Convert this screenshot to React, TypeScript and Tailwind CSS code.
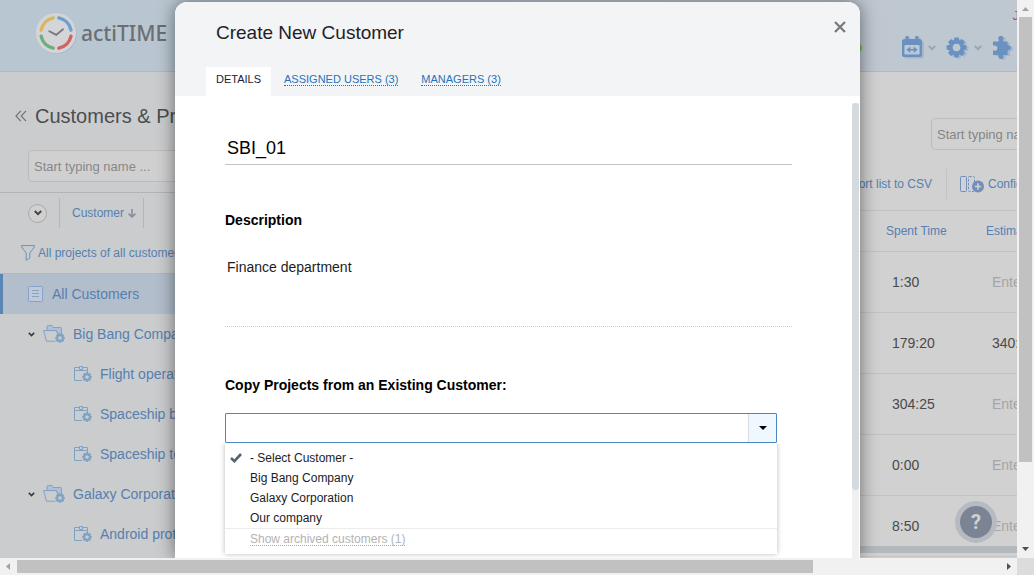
import React from "react";

const teeth = [0, 45, 90, 135];

function Gear({ className, hole }: { className: string; hole: string }) {
  return (
    <svg viewBox="0 0 22 22" className={className} fill="currentColor" aria-hidden="true">
      {teeth.map((a) => (
        <rect key={a} x="8.4" y="0.6" width="5.2" height="20.8" rx="1.2" transform={`rotate(${a} 11 11)`} />
      ))}
      <circle cx="11" cy="11" r="8" />
      <circle cx="11" cy="11" r="4" className={hole} />
    </svg>
  );
}

function Logo() {
  return (
    <svg viewBox="0 0 42 42" className="size-[42px] shrink-0" fill="none" aria-hidden="true">
      <circle cx="22" cy="22" r="20" fill="#adbccb" />
      <circle cx="21" cy="21" r="20" fill="#d3d5d8" />
      <g strokeWidth="3.4" strokeLinecap="round">
        <path d="M6.1 18.2A15.6 15.6 0 0 1 18.2 5.9" stroke="#d9b75f" />
        <path d="M23.8 5.9A15.6 15.6 0 0 1 36 18.2" stroke="#6f9fcd" />
        <path d="M36 24.2A15.6 15.6 0 0 1 23.8 36.2" stroke="#d0655f" />
        <path d="M6.1 24.2A15.6 15.6 0 0 0 18.2 36.2" stroke="#6fae7c" />
      </g>
      <path d="M14.3 19.2L21.2 22.9L28 17.3" stroke="#75787d" strokeWidth="1.8" strokeLinecap="round" />
    </svg>
  );
}

function CalendarShape() {
  return (
    <>
      <rect x="0" y="3" width="20" height="18" rx="2.6" />
      <rect x="3.4" y="0" width="3.4" height="6" rx="1.2" />
      <rect x="13.2" y="0" width="3.4" height="6" rx="1.2" />
    </>
  );
}

function CalendarIcon() {
  return (
    <svg viewBox="0 0 22 23" className="h-[23px] w-[22px]" aria-hidden="true">
      <g fill="#a3b7d0" transform="translate(2 1.4)"><CalendarShape /></g>
      <g fill="#6b91c0"><CalendarShape /></g>
      <rect x="2.4" y="9" width="15.2" height="9.6" rx="1" fill="#bdc8d3" />
      <path d="M4.4 13.8L8.3 10.6V13H11.7V10.6L15.6 13.8L11.7 17V14.6H8.3V17Z" fill="#6b91c0" />
    </svg>
  );
}

function PuzzleIcon() {
  const d =
    "M0 5.4H5.6V3.8A2.6 2.6 0 1 1 10 3.8V5.4H14.6V9.4H15.6A2.4 2.4 0 1 1 15.6 14.2H14.6V19H10.2V19.6A2.5 2.5 0 1 1 5.6 19.6V19H0V14.6H1.2A2.6 2.6 0 1 0 1.2 9.6H0Z";
  return (
    <svg viewBox="0 0 22 24" className="h-6 w-[22px]" aria-hidden="true">
      <path d={d} fill="#a3b7d0" transform="translate(2.4 1)" />
      <path d={d} fill="#6b91c0" />
    </svg>
  );
}

function Chevron({ className }: { className: string }) {
  return (
    <svg viewBox="0 0 8 6" className={className} fill="none" stroke="currentColor" strokeWidth="2" aria-hidden="true">
      <path d="M0.8 1L4 4.2L7.2 1" />
    </svg>
  );
}

function FolderIcon() {
  return (
    <span className="relative h-[18px] w-[22px] shrink-0 text-[#83a0c8]">
      <svg viewBox="0 0 22 18" className="h-[18px] w-[22px]" fill="none" stroke="currentColor" aria-hidden="true">
        <path d="M4 5.5V1.8Q4 0.5 5.2 0.5H9L10.2 2.5H17.5Q18.5 2.5 18.5 3.5V10H16L13 5.5Z" fill="#b0bfd6" />
        <path d="M12.5 16.2H3.5L0.6 5.6H13.2L15 9" />
      </svg>
      <Gear className="absolute left-3 top-2 size-[10px] text-[#7ea3c5]" hole="fill-[#cbccce]" />
    </span>
  );
}

function ProjectIcon() {
  return (
    <span className="relative h-4 w-[17px] shrink-0 text-[#7ea3c5]">
      <svg viewBox="0 0 17 16" className="h-4 w-[17px]" fill="none" stroke="currentColor" aria-hidden="true">
        <path d="M8 14.5H0.5V1.5H13.5V7M0.5 4.5H13.5" />
        <path d="M5.5 3.5V0.5H8.5V3.5Z" fill="#cbccce" />
      </svg>
      <Gear className="absolute left-2 top-1.5 size-[10px]" hole="fill-[#cbccce]" />
    </span>
  );
}

const tree = [
  { name: "Big Bang Company", projects: ["Flight operations", "Spaceship building", "Spaceship testing"] },
  { name: "Galaxy Corporation", projects: ["Android prototype"] },
];

const rows = [
  { spent: "1:30", estimate: "" },
  { spent: "179:20", estimate: "340:00" },
  { spent: "304:25", estimate: "" },
  { spent: "0:00", estimate: "" },
  { spent: "8:50", estimate: "" },
];

const customers = ["- Select Customer -", "Big Bang Company", "Galaxy Corporation", "Our company"];

function Header() {
  return (
    <header className="flex h-18 shrink-0 items-center overflow-hidden border-b border-[#a9bac8] bg-linear-to-r from-[#b8c6d2] to-[#bfc8d0] pl-[35px]">
      <a href="#home" className="flex items-center gap-1 pb-1.5">
        <Logo />
        <span className="font-['Noto_Sans',sans-serif] text-[21px] font-medium leading-7 text-[#6b6e72]">actiTIME</span>
      </a>
      <nav className="ml-auto flex flex-col items-end pt-2">
        <a href="#profile" className="-mr-0.5 text-[13px] leading-4 text-[#8f5a86]">J</a>
        <div className="-mr-1 flex items-center pb-3 pt-3">
          <span className="mr-10 size-3 rounded-full bg-[#7cc04a]" />
          <button aria-label="Calendar"><CalendarIcon /></button>
          <Chevron className="ml-1 mr-2.5 h-1.5 w-2 text-[#9aa5b3]" />
          <button aria-label="Settings" className="relative size-[22px]">
            <Gear className="absolute left-0.5 top-px size-[21px] text-[#a3b7d0]" hole="fill-[#bec8d2]" />
            <Gear className="relative size-[21px] text-[#6b91c0]" hole="fill-[#bec8d2]" />
          </button>
          <Chevron className="ml-1.5 mr-[11px] h-1.5 w-2 text-[#9aa5b3]" />
          <button aria-label="Integrations" className="mr-1.5"><PuzzleIcon /></button>
        </div>
      </nav>
    </header>
  );
}

function Sidebar() {
  return (
    <aside className="w-[300px] shrink-0 overflow-hidden whitespace-nowrap bg-[#cbccce] text-sm text-[#5580b0]">
      <div className="flex h-[78px] items-center gap-2 px-[15px] pt-2.5">
        <svg viewBox="0 0 12 12" className="size-3" fill="none" stroke="#707376" strokeWidth="1.2" aria-hidden="true">
          <path d="M5.8 0.8L1 6L5.8 11.2M11 0.8L6.2 6L11 11.2" />
        </svg>
        <h1 className="text-xl text-[#4b4d50]">Customers &amp; Projects</h1>
      </div>
      <div className="border-b border-[#b3b4b6] pb-2.5 pl-7">
        <input
          aria-label="Find customer or project"
          placeholder="Start typing name ..."
          className="h-8 w-60 rounded-sm border border-[#bbb] bg-[#d0d0d0] px-[5px] text-[13px] placeholder:text-[#888]"
        />
      </div>
      <div className="flex h-10 items-center pl-7 text-xs">
        <button aria-label="Expand all" className="mr-3 grid size-[19px] place-items-center rounded-full border border-[#a9a9aa] bg-[#d0d0d0] text-[#444]">
          <Chevron className="h-1.5 w-2" />
        </button>
        <button className="flex h-[30px] w-[85px] items-center gap-1 border-x border-[#b5b6b8] pl-3">
          Customer
          <svg viewBox="0 0 8 9" className="h-[9px] w-2" fill="none" stroke="#84909c" strokeWidth="1.6" aria-hidden="true">
            <path d="M4 0V8M0.6 4.6L4 8L7.4 4.6" />
          </svg>
        </button>
      </div>
      <button className="flex h-[41px] w-full items-center gap-[3px] border-b border-[#b5b6b8] pl-[21px] text-xs">
        <svg viewBox="0 0 14 16" className="h-4 w-3.5" fill="none" stroke="#6f8fbd" aria-hidden="true">
          <path d="M0.6 0.6H13.4V2L8.8 8V13L5.2 15.2V8L0.6 2Z" />
        </svg>
        All projects of all customers
      </button>
      <a href="#all" className="flex h-10 items-center gap-2 border-l-3 border-[#5a86b5] bg-[#b3becc] pl-[25px]">
        <svg viewBox="0 0 16 16" className="size-4" fill="none" stroke="#86a3cc" aria-hidden="true">
          <rect x="0.5" y="0.5" width="14" height="15" rx="0.8" fill="#bfcad8" />
          <path d="M4 4.5H11M4 7.5H11M4 10.5H11" />
        </svg>
        All Customers
      </a>
      {tree.map((c) => (
        <div key={c.name}>
          <a href="#customer" className="flex h-10 items-center pl-7">
            <Chevron className="mr-2 h-[5px] w-[7px] text-[#3b3b3c]" />
            <FolderIcon />
            <span className="ml-2">{c.name}</span>
          </a>
          {c.projects.map((p) => (
            <a key={p} href="#project" className="flex h-10 items-center gap-[9px] pl-[74px]">
              <ProjectIcon />
              {p}
            </a>
          ))}
        </div>
      ))}
    </aside>
  );
}

function Projects() {
  return (
    <main className="relative min-w-0 flex-1 overflow-hidden bg-[#d1d1d1] text-[#5580b0]">
      <div className="-mr-16 whitespace-nowrap">
        <div className="flex justify-end pt-[46px]">
          <input
            aria-label="Find task"
            placeholder="Start typing name ..."
            className="h-8 w-[150px] rounded-sm border border-[#bcbcbc] px-[5px] text-[13px] placeholder:text-[#858585]"
          />
        </div>
        <div className="flex h-[61px] items-center justify-end border-b border-[#c3c3c3] pt-2 text-xs">
          <button className="mr-3.5">Export list to CSV</button>
          <button className="flex h-[30px] w-[135px] items-center gap-1 border-l border-[#c3c3c3] pl-[13px]">
            <svg viewBox="0 0 24 17" className="h-[17px] w-6" fill="none" stroke="#6f8fbd" aria-hidden="true">
              <rect x="0.5" y="0.5" width="6" height="15" rx="1" />
              <rect x="8.5" y="0.5" width="6" height="15" rx="1" strokeDasharray="2.4 1.4" />
              <circle cx="18" cy="10.5" r="6" fill="#6f8fbd" stroke="none" />
              <path d="M14.8 10.5H21.2M18 7.3V13.7" stroke="#d1d1d1" strokeWidth="1.6" />
            </svg>
            Configure
          </button>
        </div>
        <table className="w-full table-fixed text-left">
          <thead>
            <tr className="h-10 border-b border-[#c3c3c3] text-xs">
              <td />
              <th className="w-[100px] pl-[15px] font-normal">Spent Time</th>
              <th className="w-[110px] pl-[15px] font-normal">Estimate</th>
            </tr>
          </thead>
          <tbody>
            {rows.map((r) => (
              <tr key={r.spent} className="h-[61px] border-b border-[#c3c3c3] text-sm text-[#4a4a4a]">
                <td />
                <td className="pl-[21px]">{r.spent}</td>
                <td className={r.estimate ? "pl-[21px]" : "pl-[21px] text-[#a4a5a8]"}>{r.estimate || "Enter"}</td>
              </tr>
            ))}
          </tbody>
        </table>
      </div>
      <div className="absolute inset-x-0 bottom-[5px] h-[7px] bg-[#b4b9bd]" />
      <button aria-label="Help" className="absolute bottom-[15px] right-5 grid size-[42px] place-items-center rounded-full border-5 border-[#b7bbc1] bg-[#7a8495] font-['Roboto',sans-serif] text-xl font-bold text-[#d0d2d4]">
        ?
      </button>
    </main>
  );
}

function CustomerPicker() {
  return (
    <div className="relative mr-[15px]">
      <div className="flex h-[30px]">
        <select
          id="copy-from"
          defaultValue=""
          className="h-full w-full appearance-none rounded-[1px] border border-[#4a86c2] bg-white px-2 text-xs"
        >
          <option value="" />
          {customers.slice(1).map((c) => (
            <option key={c}>{c}</option>
          ))}
        </select>
        <span className="pointer-events-none absolute right-px top-px grid h-7 w-7 place-items-center border-l border-[#d9dde2] bg-[#f0f8ff]">
          <svg viewBox="0 0 8 4" className="h-1 w-2" aria-hidden="true"><path d="M0 0H8L4 4Z" /></svg>
        </span>
      </div>
      <div className="absolute inset-x-0 top-full bg-white pb-[5px] pt-[5px] text-xs text-[#1c1c1c] shadow-[0_0_5px_rgba(0,0,0,0.28)] [clip-path:inset(0_-8px_-8px_-8px)]">
        <ul role="listbox" aria-label="Customers">
          {customers.map((c, i) => (
            <li key={c} role="option" aria-selected={i === 0} className="flex h-5 items-center">
              <span className="w-[25px] pl-[5px]">
                {i === 0 && (
                  <svg viewBox="0 0 12 10" className="h-2.5 w-3" fill="none" stroke="#59636e" strokeWidth="2.6" aria-hidden="true">
                    <path d="M1 5L4.4 8.2L11 1" />
                  </svg>
                )}
              </span>
              {c}
            </li>
          ))}
        </ul>
        <div className="flex h-[21px] items-end border-t border-[#ececec] pl-[25px]">
          <button className="mb-[3px] border-b border-dotted border-[#aaa] leading-3 text-[#b3b3b3]">Show archived customers (1)</button>
        </div>
      </div>
    </div>
  );
}

function Dialog() {
  return (
    <div
      role="dialog"
      aria-label="Create New Customer"
      className="flex min-w-0 flex-1 flex-col overflow-hidden rounded-t-xl bg-white text-black shadow-[0_0_18px_rgba(0,0,0,0.5)]"
    >
      <div className="flex h-[94px] shrink-0 flex-col justify-between bg-[#f3f4f6] pl-[31px]">
        <div className="flex items-start justify-between pl-2.5 pr-[13px] pt-[18px]">
          <h2 className="text-[19px] leading-[26px] text-[#1f2226]">Create New Customer</h2>
          <button aria-label="Close" className="p-px">
            <svg viewBox="0 0 12 12" className="size-3" stroke="#74797f" strokeWidth="2.2" aria-hidden="true">
              <path d="M1 1L11 11M11 1L1 11" />
            </svg>
          </button>
        </div>
        <div role="tablist" className="flex h-[29px] text-[11px] leading-3">
          <button role="tab" aria-selected="true" className="bg-white px-2.5 pb-1.5 text-[#1d1d2b]">DETAILS</button>
          <button role="tab" aria-selected="false" className="px-[13px] pb-1 text-[#2473bd]">
            <span className="inline-block border-b border-dotted border-[#2473bd]">ASSIGNED USERS (3)</span>
          </button>
          <button role="tab" aria-selected="false" className="px-2.5 pb-1 text-[#2473bd]">
            <span className="inline-block border-b border-dotted border-[#2473bd]">MANAGERS (3)</span>
          </button>
        </div>
      </div>
      <div className="flex min-h-0 flex-1">
        <form className="min-w-0 flex-1 pl-[50px] pr-[60px] pt-9">
          <input aria-label="Customer name" defaultValue="SBI_01" className="block h-[33px] w-full border-b border-[#c4c4c4] pl-0.5 text-lg" />
          <label htmlFor="description" className="mt-[45px] block text-sm font-bold">Description</label>
          <textarea
            id="description"
            defaultValue="Finance department"
            className="mt-[27px] block h-[70px] w-full resize-none border-b border-dotted border-[#c8c8c8] pl-0.5 text-sm text-[#1c1c1c]"
          />
          <label htmlFor="copy-from" className="mb-[18px] mt-12 block text-sm font-bold">Copy Projects from an Existing Customer:</label>
          <CustomerPicker />
        </form>
        <div className="mr-px mt-[7px] w-[7px] bg-[#f0f0f0]">
          <div className="h-[85%] rounded-full bg-[#d5dade]" />
        </div>
      </div>
    </div>
  );
}

export default function App() {
  return (
    <div className="grid h-screen grid-cols-[1fr_17px] grid-rows-[1fr_17px] overflow-hidden font-['Liberation_Sans',Arial,sans-serif]">
      <div className="relative flex min-h-0 min-w-0 flex-col overflow-hidden">
        <Header />
        <div className="flex min-h-0 flex-1">
          <Sidebar />
          <Projects />
        </div>
        <div className="absolute inset-0 flex pl-[175px] pr-[157px] pt-0.5">
          <Dialog />
        </div>
      </div>
      <div className="flex flex-col items-center bg-[#f1f1f1]">
        <svg viewBox="0 0 17 17" className="size-[17px] shrink-0" fill="#a3a3a3" aria-hidden="true"><path d="M5 11H12L8.5 7Z" /></svg>
        <div className="min-h-0 w-[13px] flex-1"><div className="h-[85%] bg-[#c1c1c1]" /></div>
        <svg viewBox="0 0 17 17" className="size-[17px] shrink-0" fill="#505050" aria-hidden="true"><path d="M5 6H12L8.5 10Z" /></svg>
      </div>
      <div className="flex items-center bg-[#f1f1f1]">
        <svg viewBox="0 0 17 17" className="size-[17px] shrink-0" fill="#a3a3a3" aria-hidden="true"><path d="M10 5V12L6 8.5Z" /></svg>
        <div className="h-[13px] min-w-0 flex-1"><div className="h-full w-[81%] bg-[#c1c1c1]" /></div>
        <svg viewBox="0 0 17 17" className="size-[17px] shrink-0" fill="#505050" aria-hidden="true"><path d="M7 5V12L11 8.5Z" /></svg>
      </div>
      <div className="bg-[#dcdcdc]" />
    </div>
  );
}
